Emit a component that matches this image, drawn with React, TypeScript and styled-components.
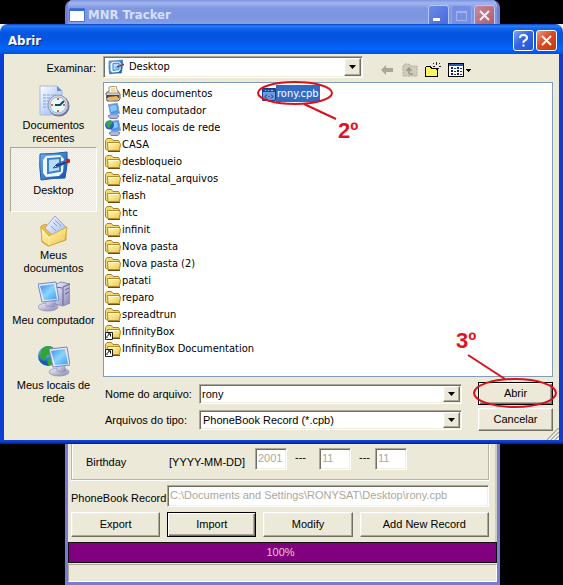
import React from "react";
import styled, { createGlobalStyle, css } from "styled-components";

const TAHOMA = `"DejaVu Sans Condensed", "DejaVu Sans", sans-serif`;
const SANS = `"Liberation Sans", Arial, sans-serif`;

const GlobalStyle = createGlobalStyle`
  *, *::before, *::after { box-sizing: border-box; }
  body { margin: 0; background: #000; color: #000; font: 11px/13px ${SANS}; }
  button, input, select { font: inherit; color: inherit; margin: 0; padding: 0; border-radius: 0; }
  svg { display: block; flex: none; }
`;

const raised = css`
  border: 1px solid;
  border-color: #fff #716f64 #716f64 #fff;
  box-shadow: inset -1px -1px #aca899, inset 1px 1px #f1efe2;
`;
const sunken = css`
  border: 1px solid;
  border-color: #aca899 #fff #fff #aca899;
  box-shadow: inset 1px 1px #716f64, inset -1px -1px #f1efe2;
`;

/* ---------- page ---------- */
const Stage = styled.main`
  min-height: 100vh;
  display: grid;
  grid-template-columns: minmax(0, 1fr);
  grid-template-rows: 24px auto 1fr;
`;

/* ---------- tracker window ---------- */
const Tracker = styled.section`
  grid-area: 1 / 1 / 4 / 2;
  margin: 0 63px 0 65px;
  display: flex;
  flex-direction: column;
  border: solid #747bd8;
  border-width: 0 3px 3px;
  border-radius: 8px 8px 0 0;
  background: #ece9d8;
  overflow: hidden;
`;
const TrackerTitle = styled.header`
  height: 28px;
  flex: none;
  margin: 0 -3px;
  padding: 2px 5px 0 4px;
  display: flex;
  align-items: center;
  gap: 2px;
  background: linear-gradient(#7d93e0, #a2b6ee 3px, #8098e2 8px, #7d95e0 18px, #8ea5e8);
`;
const TitleText = styled.h1<{ $dim?: boolean }>`
  margin: 0;
  flex: 1;
  font: bold 13px/16px ${TAHOMA};
  color: ${(p) => (p.$dim ? "#d6e0fa" : "#fff")};
  text-shadow: ${(p) => (p.$dim ? "none" : "1px 1px #0a2a8c")};
  padding-left: ${(p) => (p.$dim ? "1px" : "0")};
`;
const fills = {
  blue: "linear-gradient(135deg, #7fa2f5, #3565e4 45%, #2353d4)",
  dim: "linear-gradient(135deg, #6c8be6, #4468dc)",
  faint: "#778fe3",
  red: "linear-gradient(135deg, #f09a80, #dc4a24 45%, #c03a10)",
  dimRed: "linear-gradient(135deg, #c58a9c, #b35a68)",
};
const CaptionButton = styled.button<{ $fill: keyof typeof fills }>`
  width: 21px;
  height: 21px;
  display: grid;
  place-items: center;
  border: 1px solid ${(p) => (p.$fill === "blue" || p.$fill === "red" ? "#fff" : p.$fill === "faint" ? "#8ea5ec" : "#b8c8f6")};
  border-radius: 3px;
  background: ${(p) => fills[p.$fill]};
`;
const TrackerForm = styled.form`
  margin-top: auto;
  display: flex;
  flex-direction: column;
`;
const FormPage = styled.div`
  padding: 0 6px 5px 3px;
  border-right: 2px solid #cfccbc;
  display: flex;
  flex-direction: column;
`;
const BirthdayRow = styled.div`
  display: grid;
  grid-template-columns: 83px 86px 1fr;
  align-items: center;
  padding: 13px 14px 3px;
  border: solid #b8b4a4;
  border-width: 0 1px 1px;
  box-shadow: 0 1px #fff, 1px 0 #fff, inset 1px 0 #fff;
  height: 45px;
  margin-bottom: 5px;
`;
const DateParts = styled.div`
  display: flex;
  align-items: center;
  align-self: start;
`;
const Dashes = styled.span<{ $narrow?: boolean }>`
  width: ${(p) => (p.$narrow ? "24px" : "32px")};
  padding: 0 0 4px 8px;
  line-height: 10px;
`;
const Field = styled.input<{ $short?: boolean }>`
  ${sunken}
  height: 22px;
  width: ${(p) => (p.$short ? "32px" : "auto")};
  min-width: 0;
  padding: 0 2px 2px;
  flex: ${(p) => (p.$short ? "none" : "1")};
  background: #fff;
  color: #aca899;
`;
const RecordRow = styled.div`
  display: flex;
  align-items: center;
  margin-bottom: 5px;
`;
const RecordLabel = styled.label`
  width: 96px;
  padding-top: 5px;
  white-space: nowrap;
`;
const ActionRow = styled.div`
  display: grid;
  grid-template-columns: 89fr 89fr 89fr 129fr;
  gap: 7px;
`;
const PushButton = styled.button<{ $default?: boolean; $tall?: boolean }>`
  ${raised}
  height: ${(p) => (p.$tall ? "25px" : "23px")};
  background: #ece9d8;
  ${(p) => p.$default && css`
    border-color: #000;
    box-shadow: inset 1px 1px #fff, inset -1px -1px #716f64, inset -2px -2px #aca899;
  `}
`;
const Progress = styled.div`
  height: 21px;
  border: 1px solid #111;
  background: #800080;
  color: #e4d0c8;
  text-align: center;
  line-height: 18px;
  padding-right: 4px;
`;
const StatusBar = styled.footer`
  height: 18px;
  margin-top: 1px;
  border: 1px solid;
  border-color: #aca899 #fff #fff #aca899;
`;

/* ---------- open dialog ---------- */
const Dialog = styled.section`
  grid-area: 2 / 1 / 3 / 2;
  z-index: 1;
  background: linear-gradient(#eef4ff 8px, #0a3fd6 8px);
`;
const DialogTitle = styled.header`
  height: 30px;
  padding: 3px 6px 0 8px;
  display: flex;
  align-items: center;
  gap: 2px;
  border-radius: 8px 8px 0 0;
  background: linear-gradient(#0a3cc0, #2c80f4 2px, #1468f0 4px, #0455e0 9px, #0456e4 17px, #0266fc 25px, #0050e0);
`;
const DialogBody = styled.div`
  margin: 0 4px;
  padding: 2px 6px 9px;
  display: grid;
  grid-template-columns: 87px minmax(0, 1fr);
  column-gap: 6px;
  background: #ece9d8;
`;
const DialogBottom = styled.div`
  height: 4px;
  background: linear-gradient(#1548d8, #0a38c4 2px, #001e8c);
`;
const LookLabel = styled.label`
  justify-self: end;
  padding: 6px 1px 0 0;
`;
const LookRow = styled.div`
  display: flex;
  align-items: center;
  gap: 16px;
  height: 26px;
  padding-bottom: 4px;
`;
const Combo = styled.div<{ $icon?: boolean }>`
  ${sunken}
  flex: 1;
  min-width: 0;
  display: grid;
  grid-template-columns: ${(p) => (p.$icon ? "22px" : "0px")} minmax(0, 1fr) 17px;
  align-items: center;
  height: ${(p) => (p.$icon ? "22px" : "20px")};
  padding: 1px;
  background: #fff;
  font: 11px/14px ${(p) => (p.$icon ? TAHOMA : SANS)};
  & > svg { grid-area: 1 / 1; justify-self: center; pointer-events: none; z-index: 1; }
`;
const Select = styled.select<{ $indent?: boolean }>`
  grid-area: 1 / 1 / 2 / 4;
  width: 100%;
  height: 100%;
  padding-left: ${(p) => (p.$indent ? "24px" : "2px")};
  border: 0;
  background: transparent;
  appearance: none;
  outline: 0;
`;
const TextEntry = styled.input`
  grid-area: 1 / 1 / 2 / 3;
  width: 100%;
  padding-left: 1px;
  border: 0;
  outline: 0;
`;
const DropArrow = styled.span`
  ${raised}
  grid-area: 1 / 3;
  height: 100%;
  display: grid;
  place-items: center;
  background: #ece9d8;
  pointer-events: none;
`;
const Tools = styled.div`
  display: flex;
  align-items: center;
  gap: 7px;
  padding: 6px 81px 0 0;
`;
const ToolButton = styled.button<{ $wide?: boolean }>`
  width: ${(p) => (p.$wide ? "24px" : "16px")};
  height: 16px;
  border: 0;
  background: none;
`;
const Places = styled.nav`
  display: flex;
  flex-direction: column;
`;
const Place = styled.button<{ $active?: boolean }>`
  height: 65px;
  padding: 2px 0 0;
  display: flex;
  flex-direction: column;
  align-items: center;
  gap: 2px;
  border: 1px solid;
  border-color: ${(p) => (p.$active ? "#aca899 #fff #fff #aca899" : "transparent")};
  background: ${(p) => (p.$active ? "repeating-conic-gradient(#f8f6ee 0 25%, #ece9d8 0 50%) 0 0 / 2px 2px" : "none")};
  white-space: pre-line;
  line-height: 13px;
`;
const Content = styled.div`
  display: flex;
  flex-direction: column;
`;
const Files = styled.ul`
  margin: 0;
  padding: 2px 1px;
  list-style: none;
  height: 295px;
  border: 1px solid #7f9db9;
  background: #fff;
  display: grid;
  grid-auto-flow: column;
  grid-template-rows: repeat(16, 17px);
  grid-auto-columns: 157px;
  font: 11px/15px ${TAHOMA};
`;
const FileRow = styled.li`
  position: relative;
`;
const FileButton = styled.button`
  display: flex;
  align-items: center;
  height: 17px;
  border: 0;
  background: none;
  white-space: nowrap;
`;
const FileName = styled.span<{ $selected?: boolean }>`
  padding: 1px;
  ${(p) => p.$selected && css`background: #316ac5; color: #fff;`}
`;
const Entry = styled.div`
  display: grid;
  grid-template-columns: 96px minmax(0, 1fr) 75px;
  row-gap: 3px;
  align-items: center;
  padding-top: 5px;
`;
const EntryLabel = styled.label`
  padding: 2px 0 0 2px;
  white-space: nowrap;
`;
const EntryCombo = styled.div`
  display: flex;
  padding-right: 16px;
`;
const Anchor = styled.div`
  position: relative;
  display: grid;
`;
const Mark = styled.svg<{ $x: number; $y: number }>`
  position: absolute;
  left: ${(p) => p.$x}px;
  top: ${(p) => p.$y}px;
  z-index: 2;
  pointer-events: none;
  overflow: visible;
  fill: none;
  stroke: #d8121c;
  stroke-width: 2;
  text {
    font: bold 22px ${SANS};
    fill: #e0141e;
    stroke: none;
  }
`;
const Grip = styled.svg`
  position: absolute;
  right: -6px;
  bottom: -9px;
`;
const SharedPaints = styled.svg`
  position: absolute;
`;

/* ---------- drawings ---------- */
const Gradients = () => (
  <SharedPaints width="0" height="0" aria-hidden="true">
    <defs>
      <linearGradient id="screen" x1="0" y1="0" x2="1" y2="1">
        <stop offset="0" stopColor="#3f8cec" /><stop offset=".5" stopColor="#8cd4fc" /><stop offset="1" stopColor="#3e9cf0" />
      </linearGradient>
      <linearGradient id="metal" x1="0" y1="0" x2="1" y2="1">
        <stop offset="0" stopColor="#f4f4fc" /><stop offset="1" stopColor="#8684b4" />
      </linearGradient>
      <linearGradient id="folder" x1="0" y1="0" x2="1" y2="1">
        <stop offset="0" stopColor="#fffbc8" /><stop offset="1" stopColor="#f0c648" />
      </linearGradient>
      <linearGradient id="paper" x1="0" y1="0" x2="1" y2="1">
        <stop offset="0" stopColor="#fff" /><stop offset="1" stopColor="#8cb0f0" />
      </linearGradient>
      <linearGradient id="desk" x1="0" y1="0" x2="1" y2="1">
        <stop offset="0" stopColor="#6cb0f4" /><stop offset="1" stopColor="#1450a8" />
      </linearGradient>
      <radialGradient id="globe" cx=".35" cy=".3">
        <stop offset="0" stopColor="#9ce8f8" /><stop offset="1" stopColor="#1458b8" />
      </radialGradient>
    </defs>
  </SharedPaints>
);

const FolderIcon = ({ shortcut }: { shortcut?: boolean }) => (
  <svg width="16" height="16" viewBox="0 0 16 16">
    <path d="M.5 12V3.500L2 1.500h4.500L8 3.500h5.500L14.500 5v8H2z" fill="#f4d870" stroke="#a88424" />
    <path d="M2.500 5.500H14l1.500 1.500-1 6.500H3z" fill="url(#folder)" stroke="#b08c2c" />
    <path d="M3.500 6.500h10" stroke="#fffde0" />
    <path d="M3 14.500h12" stroke="#6c5010" />
    {shortcut && <g><path d="M.5 8.500h7v7h-7z" fill="#fff" stroke="#222" /><path d="M2 14v-1.500l2.500-2.500M3 9.800h2.500v2.700" fill="none" stroke="#000" /></g>}
  </svg>
);

const DesktopIcon = ({ size = 32 }: { size?: number }) => (
  <svg width={size} height={size} viewBox="0 0 32 32">
    <path d="M2 4q13 0 27-2 1 12-2 26-12 0-24 2Q1 16 2 4z" fill="url(#desk)" stroke="#1c5cac" />
    <path d="M8 6l14-1 4 4-1 13-4 4-13 1-3-4 0-13z" fill="#eef6ff" />
    <path d="M10 9l12-1v13l-12 2z" fill="#b8ddfa" stroke="#3b82cc" strokeWidth="2" />
    <path d="M15 18l4-4 9-4 2 2-10 5z" fill="#e6f0fa" stroke="#24549c" />
    <path d="M18 16l10-4" stroke="#163c80" strokeWidth="2" />
    <circle cx="30" cy="11" r="2.200" fill="#a82c24" />
  </svg>
);

const RecentIcon = () => (
  <svg width="32" height="32" viewBox="0 0 32 32">
    <path d="M2 1h17l5 5v24H2z" fill="url(#paper)" stroke="#a4bce0" />
    <path d="M19 1v5h5z" fill="#5c90dc" />
    <path d="M5 10h13M5 13h11M5 16h8M5 19h6M5 22h6" stroke="#7ca4d8" strokeDasharray="3 1" />
    <circle cx="21" cy="21" r="10.500" fill="#6c7090" />
    <circle cx="20" cy="20" r="10" fill="#d4dced" stroke="#8c98bc" />
    <circle cx="20" cy="20" r="8" fill="#e8fbf8" stroke="#a0b4cc" />
    <path d="M20 13v2M20 25v2M13 20h2M25 20h2" stroke="#d86850" strokeWidth="2" />
    <path d="M17 20h5l4-4" fill="none" stroke="#184860" strokeWidth="2" />
  </svg>
);

const DocumentsIcon = () => (
  <svg width="32" height="32" viewBox="0 0 32 32">
    <path d="M3 11l5-2 2 3 14-4 4 4v13L10 31 4 27z" fill="#edbd48" stroke="#d0a040" />
    <path d="M7 13L17 1l11 11-9 13z" fill="url(#paper)" stroke="#94acd8" />
    <path d="M15 7l4 4M13 11l5 5M17 5l6 6" stroke="#78a8e4" />
    <path d="M3 12l8 9 18-9-2 13-16 6-7-5z" fill="url(#folder)" stroke="#dca83c" />
    <path d="M11 21v9" stroke="#fff3a8" />
  </svg>
);

const Monitor = ({ x = 0 }: { x?: number }) => (
  <g transform={`translate(${x} 0)`}>
    <ellipse cx="10" cy="27" rx="10" ry="4" fill="url(#metal)" stroke="#8c8ab4" strokeWidth=".7" />
    <path d="M8 19h7l2 7q-4 2-9 0z" fill="url(#metal)" stroke="#8886b4" strokeWidth=".5" />
    <path d="M0 4l18-2 3 18L4 22z" fill="#e4e8f8" stroke="#7688c0" />
    <path d="M2 6l14-2 3 15-13 1z" fill="url(#screen)" />
  </g>
);

const ComputerIcon = () => (
  <svg width="32" height="32" viewBox="0 0 32 32">
    <path d="M17 5l6-3 9 2v19l-7 3-8-2z" fill="url(#metal)" stroke="#8c8ab8" />
    <path d="M25 7v18M25 7l7-3M27 10l4-2M27 14l4-2M18 7l6 1" stroke="#645e98" fill="none" />
    <Monitor />
  </svg>
);

const NetworkIcon = () => (
  <svg width="32" height="32" viewBox="0 0 32 32">
    <circle cx="10" cy="11" r="10" fill="url(#globe)" />
    <path d="M3 5q5-6 11-3l2 5-4 3-3 0-2 6-5-4zM9 14l7-1v7l-6 0z" fill="#34a438" />
    <Monitor x={11} />
  </svg>
);

const SmallMonitor = () => (
  <g>
    <path d="M3 13l4-2h4l3 2-2 2.500H5z" fill="#b4b4d4" stroke="#7c7ca8" />
    <path d="M3.500 1.500l9-1 2 10-9 1z" fill="#4c98ec" stroke="#8c9ccc" />
    <path d="M5 3l6-1 1 5-6 2z" fill="#84ccfc" />
  </g>
);
const SmallComputerIcon = () => (
  <svg width="16" height="16" viewBox="0 0 16 16"><SmallMonitor /></svg>
);
const SmallNetworkIcon = () => (
  <svg width="16" height="16" viewBox="0 0 16 16">
    <g transform="translate(1 0)"><SmallMonitor /></g>
    <circle cx="4.500" cy="5" r="4.500" fill="#2464b8" />
    <path d="M1 3q3-4 6-2v3L5 5v3L2 7z" fill="#38a840" />
  </svg>
);

const PrinterFolderIcon = () => (
  <svg width="16" height="16" viewBox="0 0 16 16">
    <path d="M1 7l3-2h9l2 3v5l-2 2H2z" fill="#c8ccd8" stroke="#645c54" />
    <path d="M4 7V1l7-1 2 7z" fill="#fff" stroke="#a89464" />
    <path d="M6 3h4M6 5h5" stroke="#e8ac50" />
    <path d="M2 9h12v3H2z" fill="#484444" />
    <path d="M3 11l9-1 2 3-9 2z" fill="#eeb64c" />
  </svg>
);

const ProgramFileIcon = () => (
  <svg width="14" height="16" viewBox="0 0 14 16">
    <path d="M.5 2.500h13v12H.5z" fill="#6c9ce0" stroke="#163c88" />
    <path d="M1 3h12v3H1z" fill="#1c4c9c" />
    <path d="M3 4.500h1M6 4.500h1M9 4.500h2" stroke="#a8ccfa" />
    <path d="M5 8.500l-2 2 2 2M9 8.500l2 2-2 2M7 10v1" fill="none" stroke="#102c70" />
  </svg>
);

const Triangle = () => (
  <svg width="7" height="4" viewBox="0 0 7 4"><path d="M0 0h7L3.500 4z" /></svg>
);
const CrossIcon = ({ color = "#fff" }) => (
  <svg width="11" height="11" viewBox="0 0 11 11"><path d="M1 1l9 9M10 1l-9 9" stroke={color} strokeWidth="2" /></svg>
);
const BackIcon = () => (
  <svg width="16" height="16" viewBox="0 0 16 16"><path d="M2 8l5-5v3h7v4H7v3z" fill="#aca899" /></svg>
);
const UpFolderIcon = () => (
  <svg width="16" height="16" viewBox="0 0 16 16">
    <path d="M1 4l2-2h4l2 2h6v10H1z" fill="#d0ccbc" stroke="#aca899" strokeDasharray="2 1" />
    <path d="M7 12V7M4.500 9L7 6l2.500 3M7 12h4" fill="none" stroke="#9c988a" strokeWidth="1.500" />
  </svg>
);
const NewFolderIcon = () => (
  <svg width="16" height="16" viewBox="0 0 16 16" shapeRendering="crispEdges">
    <path d="M.5 14.500v-9l1-1h4l1 2h6v8z" fill="#fcf45c" stroke="#000" />
    <path d="M11.500 0v3M11.500 6v2M7.500 4.500h2M13.500 4.500H16M8.500 1.500l1 1M14.500 1.500l-1 1M14.500 7.500l-1-1" stroke="#222" />
  </svg>
);
const ViewIcon = () => (
  <svg width="24" height="16" viewBox="0 0 24 16" shapeRendering="crispEdges">
    <path d="M.5 1.500h15v13H.5z" fill="#fff" stroke="#000" />
    <path d="M1 2h14v2H1z" fill="#2858b0" />
    <path d="M3 5h2v2H3zM3 8h2v2H3zM3 11h2v2H3zM9 5h2v2H9zM9 8h2v2H9zM9 11h2v2H9z" fill="#101878" />
    <path d="M6 6.500h2M6 9.500h2M6 12.500h2M12 6.500h2M12 9.500h2M12 12.500h2" stroke="#333" />
    <path d="M18 7h5v1h-1v1h-1v1h-1V9h-1V8h-1z" />
  </svg>
);

/* ---------- data ---------- */
const places = [
  { name: "Documentos\nrecentes", icon: <RecentIcon /> },
  { name: "Desktop", icon: <DesktopIcon />, active: true },
  { name: "Meus\ndocumentos", icon: <DocumentsIcon /> },
  { name: "Meu computador", icon: <ComputerIcon /> },
  { name: "Meus locais de\nrede", icon: <NetworkIcon /> },
];
const folders = ["CASA", "desbloqueio", "feliz-natal_arquivos", "flash", "htc", "infinit", "Nova pasta", "Nova pasta (2)", "patati", "reparo", "spreadtrun"];
const files = [
  { name: "Meus documentos", icon: <PrinterFolderIcon /> },
  { name: "Meu computador", icon: <SmallComputerIcon /> },
  { name: "Meus locais de rede", icon: <SmallNetworkIcon /> },
  ...folders.map((name) => ({ name, icon: <FolderIcon /> })),
  { name: "InfinityBox", icon: <FolderIcon shortcut /> },
  { name: "InfinityBox Documentation", icon: <FolderIcon shortcut /> },
];

function TrackerWindow() {
  return (
    <Tracker aria-label="MNR Tracker">
      <TrackerTitle>
        <svg width="16" height="14" viewBox="0 0 16 14"><path d="M.5.500h15v13H.5z" fill="#fff" stroke="#4474d8" /><path d="M1 1h14v2H1z" fill="#3468d8" /></svg>
        <TitleText $dim>MNR Tracker</TitleText>
        <CaptionButton $fill="dim" aria-label="Minimize"><svg width="11" height="11"><path d="M0 8h7v3H0z" fill="#fff" /></svg></CaptionButton>
        <CaptionButton $fill="faint" aria-label="Maximize" disabled><svg width="11" height="11"><path d="M.5 1.500h10v9H.5zM.5 2.500h10" fill="none" stroke="#a0b4f0" /></svg></CaptionButton>
        <CaptionButton $fill="dimRed" aria-label="Close"><CrossIcon color="#f6eef6" /></CaptionButton>
      </TrackerTitle>
      <TrackerForm onSubmit={(e) => e.preventDefault()}>
        <FormPage>
          <BirthdayRow>
            <label htmlFor="year">Birthday</label>
            <span>[YYYY-MM-DD]</span>
            <DateParts>
              <Field $short id="year" defaultValue="2001" disabled />
              <Dashes>---</Dashes>
              <Field $short aria-label="Month" defaultValue="11" disabled />
              <Dashes $narrow>---</Dashes>
              <Field $short aria-label="Day" defaultValue="11" disabled />
            </DateParts>
          </BirthdayRow>
          <RecordRow>
            <RecordLabel htmlFor="record">PhoneBook Record</RecordLabel>
            <Field id="record" defaultValue={"C:\\Documents and Settings\\RONYSAT\\Desktop\\rony.cpb"} disabled />
          </RecordRow>
          <ActionRow>
            <PushButton $tall type="button">Export</PushButton>
            <PushButton $tall $default type="button">Import</PushButton>
            <PushButton $tall type="button">Modify</PushButton>
            <PushButton $tall type="button">Add New Record</PushButton>
          </ActionRow>
        </FormPage>
        <Progress role="progressbar" aria-label="Progress" aria-valuenow={100}>100%</Progress>
        <StatusBar />
      </TrackerForm>
    </Tracker>
  );
}

function OpenDialog() {
  return (
    <Dialog role="dialog" aria-label="Abrir">
      <DialogTitle>
        <TitleText as="h2">Abrir</TitleText>
        <CaptionButton $fill="blue" aria-label="Help">
          <svg width="11" height="13" viewBox="0 0 11 13"><path d="M2 4q0-3 3.500-3T9 4q0 1.500-2 2.500T5.500 9" fill="none" stroke="#fff" strokeWidth="2" /><path d="M4.500 10.500h2v2h-2z" fill="#fff" /></svg>
        </CaptionButton>
        <CaptionButton $fill="red" aria-label="Close"><CrossIcon /></CaptionButton>
      </DialogTitle>
      <DialogBody>
        <LookLabel htmlFor="look">Examinar:</LookLabel>
        <LookRow>
          <Combo $icon>
            <DesktopIcon size={16} />
            <Select $indent id="look"><option>Desktop</option></Select>
            <DropArrow><Triangle /></DropArrow>
          </Combo>
          <Tools>
            <ToolButton aria-label="Voltar" disabled><BackIcon /></ToolButton>
            <ToolButton aria-label="Acima" disabled><UpFolderIcon /></ToolButton>
            <ToolButton aria-label="Nova pasta"><NewFolderIcon /></ToolButton>
            <ToolButton $wide aria-label="Exibir"><ViewIcon /></ToolButton>
          </Tools>
        </LookRow>
        <Places>
          {places.map((p) => (
            <Place key={p.name} $active={p.active}>{p.icon}<span>{p.name}</span></Place>
          ))}
        </Places>
        <Content>
          <Files>
            {files.map((f) => (
              <FileRow key={f.name}><FileButton>{f.icon}<FileName>{f.name}</FileName></FileButton></FileRow>
            ))}
            <FileRow>
              <FileButton><ProgramFileIcon /><FileName $selected>rony.cpb</FileName></FileButton>
              <Mark $x={-5} $y={-4} width="104" height="62">
                <ellipse cx="38" cy="12" rx="37" ry="11" />
                <path d="M47 23l32 15" />
                <text x="81" y="57">2º</text>
              </Mark>
            </FileRow>
          </Files>
          <Entry>
            <EntryLabel htmlFor="name">Nome do arquivo:</EntryLabel>
            <EntryCombo>
              <Combo>
                <TextEntry id="name" defaultValue="rony" />
                <DropArrow><Triangle /></DropArrow>
              </Combo>
            </EntryCombo>
            <Anchor>
              <PushButton $default>Abrir</PushButton>
              <Mark $x={-4} $y={-54} width="83" height="80">
                <ellipse cx="41" cy="65" rx="41" ry="14" />
                <path d="M-6 27l37 24" />
                <text x="-18" y="20">3º</text>
              </Mark>
            </Anchor>
            <EntryLabel htmlFor="kind">Arquivos do tipo:</EntryLabel>
            <EntryCombo>
              <Combo>
                <Select id="kind"><option>PhoneBook Record (*.cpb)</option></Select>
                <DropArrow><Triangle /></DropArrow>
              </Combo>
            </EntryCombo>
            <Anchor>
              <PushButton>Cancelar</PushButton>
              <Grip width="12" height="12" viewBox="0 0 12 12"><path d="M0 12L12 0M4 12l8-8M8 12l4-4" stroke="#aca899" strokeWidth="1.500" /><path d="M1.500 12L12 1.500M5.500 12L12 5.500M9.500 12L12 9.500" stroke="#fff" /></Grip>
            </Anchor>
          </Entry>
        </Content>
      </DialogBody>
      <DialogBottom />
    </Dialog>
  );
}

export default function App() {
  return (
    <Stage>
      <GlobalStyle />
      <Gradients />
      <TrackerWindow />
      <OpenDialog />
    </Stage>
  );
}
